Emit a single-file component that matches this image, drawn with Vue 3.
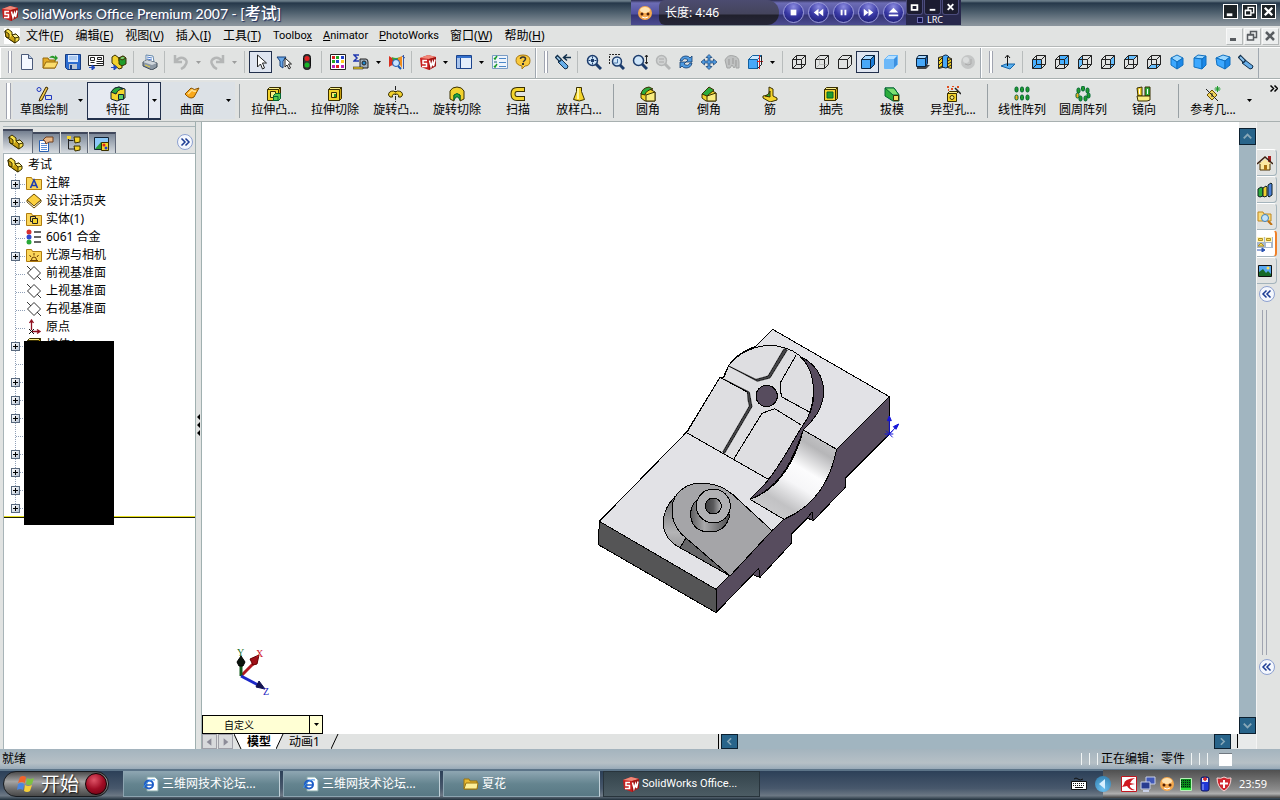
<template>
  <div class="app">
    <header class="titlebar">
      <svg class="ico" viewBox="0 0 16 16" v-html="icons.sw" />
      <h1 class="title">SolidWorks Office Premium 2007 - [<span class="title-doc">考试</span>]</h1>
      <div class="win-btns">
        <button v-for="b in winButtons" :key="b.label" class="win-btn" :aria-label="b.label">
          <svg viewBox="0 0 14 14" v-html="b.shape" />
        </button>
      </div>

      <div class="player">
        <svg class="player-face" viewBox="0 0 16 16" v-html="icons.face" />
        <div class="player-screen">长度: 4:46</div>
        <button v-for="b in playerButtons" :key="b.label" class="player-btn" :aria-label="b.label">
          <svg viewBox="0 0 20 20"><path :d="b.d" fill="#fff" /></svg>
        </button>
        <div class="player-side">
          <div class="player-wins">
            <button v-for="b in playerWins" :key="b.label" class="player-win" :aria-label="b.label">
              <svg viewBox="0 0 16 14"><path :d="b.d" fill="none" stroke="#fff" stroke-width="2" /></svg>
            </button>
          </div>
          <label class="lrc"><input type="checkbox" class="lrc-box" />LRC</label>
        </div>
      </div>
    </header>

    <nav class="menubar">
      <svg class="menu-logo" viewBox="0 0 16 16" v-html="icons.part" />
      <button v-for="m in menus" :key="m.text + m.key" class="menu-item" :class="{ word: !m.cjk }">
        {{ m.cjk }}{{ m.text }}<u>{{ m.key }}</u>{{ m.rest }}
      </button>
      <div class="doc-btns">
        <button v-for="b in winButtons" :key="b.label" class="doc-btn" :aria-label="b.label + ' document'">
          <svg viewBox="0 0 14 14" v-html="b.shape" />
        </button>
      </div>
    </nav>

    <div class="toolbars">
      <div v-for="(bar, i) in toolbars" :key="i" class="toolbar">
        <span class="grip" />
        <template v-for="(t, j) in bar" :key="j">
          <span v-if="t === '|'" class="tool-sep" />
          <template v-else>
            <button class="tool" :class="{ pressed: pressed.includes(t) }" :aria-label="t">
              <svg class="ico" viewBox="0 0 16 16" v-html="icons[t]" />
            </button>
            <button v-if="withMenu.includes(t)" class="tool-drop" :class="{ off: disabled.includes(t) }" :aria-label="t + ' menu'">
              <svg class="arrow" viewBox="0 0 5 3"><path d="M0 0h5L2.5 3z" /></svg>
            </button>
          </template>
        </template>
      </div>
    </div>

    <div class="commands">
      <span class="grip tall" />
      <template v-for="(c, i) in commands" :key="i">
        <span v-if="c === '|'" class="cmd-sep" />
        <div v-else class="cmd" :class="{ active: c.text === activeTab, tab: c.tab }">
          <button class="cmd-main" @click="c.tab && (activeTab = c.text)">
            <svg class="ico" viewBox="0 0 16 16" v-html="icons[c.icon]" />
            <span>{{ c.text }}</span>
          </button>
          <button v-if="c.drop" class="cmd-drop" :aria-label="c.text + ' menu'">
            <svg class="arrow" viewBox="0 0 5 3"><path d="M0 0h5L2.5 3z" /></svg>
          </button>
        </div>
      </template>
      <button class="cmd-more" aria-label="more">
        <svg viewBox="0 0 8 7"><path d="M.5.5l3 3-3 3M4.500.5l3 3-3 3" fill="none" stroke="#000" stroke-width="1.5" /></svg>
      </button>
    </div>

    <main class="main">
      <aside class="side">
        <div class="side-head">
          <button v-for="(t, i) in sideTabs" :key="t" class="side-tab" :class="{ active: i === 0 }" :aria-label="t">
            <svg class="ico" viewBox="0 0 16 16" v-html="icons[t]" />
          </button>
          <button class="round" aria-label="expand">
            <svg viewBox="0 0 14 14"><path d="M3.500 3.500L7 7l-3.500 3.500M7.500 3.500L11 7l-3.500 3.500" /></svg>
          </button>
        </div>
        <div class="tree">
          <div class="row root">
            <svg class="ico" viewBox="0 0 16 16" v-html="icons.part" />
            <span>考试</span>
          </div>
          <ul class="nodes">
            <li v-for="(n, i) in nodes" :key="i" class="row node">
              <span class="branch"><button v-if="n.plus" class="plus" aria-label="expand" /></span>
              <svg class="ico" viewBox="0 0 16 16" v-html="icons[n.icon]" />
              <span>{{ n.text }}</span>
            </li>
          </ul>
          <div class="rollback" />
          <div class="cover" />
        </div>
      </aside>
      <div class="splitter">
        <svg viewBox="0 0 5 22"><path d="M4 0v6L1 3zM4 8v6L1 11zM4 16v6L1 19z" /></svg>
      </div>

      <section class="work">
        <div class="view-row">
          <div class="view">
            <svg class="model" viewBox="-1134 -594 3111 1836">
              <defs>
                <linearGradient id="slot" gradientUnits="userSpaceOnUse" x1="735" y1="350" x2="590" y2="590">
                  <stop offset="0" stop-color="#c6c6c8" />
                  <stop offset=".16" stop-color="#b6b6b8" />
                  <stop offset=".42" stop-color="#fcfcfd" />
                  <stop offset=".6" stop-color="#f6f6f8" />
                  <stop offset=".85" stop-color="#c2c2c4" />
                  <stop offset="1" stop-color="#cacacc" />
                </linearGradient>
                <linearGradient id="boss" x1="0" y1="0" x2="1" y2="0">
                  <stop offset="0" stop-color="#5c5c5e" />
                  <stop offset=".35" stop-color="#a9a9ab" />
                  <stop offset="1" stop-color="#4c4c4e" />
                </linearGradient>
                <linearGradient id="hole" x1="0" y1="0" x2="1" y2="0">
                  <stop offset="0" stop-color="#3c3c3e" />
                  <stop offset=".5" stop-color="#5a5a5c" />
                  <stop offset="1" stop-color="#b5b5b7" />
                </linearGradient>
                <linearGradient id="pad" x1="0" y1="0" x2="0" y2="1">
                  <stop offset="0" stop-color="#6b6b6d" />
                  <stop offset=".45" stop-color="#b4b4b6" />
                  <stop offset="1" stop-color="#6b6b6d" />
                </linearGradient>
              </defs>
              <g stroke="#000" stroke-width="3" stroke-linejoin="round" shape-rendering="crispEdges">
                <path fill="#e2e2e6" d="M578 28L928 230 770 388Q752 460 714 510 670 575 612 598L576 632 408 808 58 604 320 336 420 172 430 172 446 136Q470 100 528 78z" />
                <path fill="#555556" d="M58 604L408 808V878L55 674z" />
                <path fill="#574c5e" d="M928 230V342L796 474V502L700 602 696 576 682 594 634 642V670L540 772 536 744 518 764 408 878V808L576 632 612 598C700 560 750 490 770 388z" />
                <path fill="#574c5e" d="M518 764L536 744 540 772zM682 594L696 576 700 602z" />
                <path fill="url(#slot)" d="M670 330L770 388C750 490 700 560 612 598L510 538C590 510 640 440 670 330z" />
                <path fill="#574c5e" d="M648 104C705 125 732 170 731 220 727 270 700 300 670 330 645 400 610 500 510 538 540 505 560 490 565 478 590 440 645 370 660 314 680 300 695 280 700 240 700 180 690 140 648 104z" />
                <path fill="#dedee1" d="M446 136C490 82 560 65 616 84 685 105 703 170 700 225 697 265 685 295 670 314 645 350 600 440 565 478L320 338 420 172 432 172z" />
                <path fill="none" d="M648 106L600 190 604 230 692 278M662 314L584 266 546 280 462 416" />
                <path fill="#444447" stroke-width="2" d="M432 178L502 216 504 240 508 258 428 396 434 400 516 260 508 216zM446 138L528 178 564 168 612 86 622 90 570 174 532 184z" />
                <path fill="none" d="M420 172L502 216M320 338L565 478" />
                <circle cx="560" cy="228" r="32" fill="#574c5e" />
                <path fill="url(#pad)" d="M285 530C236 580 236 650 300 683L450 768 318 656 276 580z" />
                <path fill="#666668" d="M300 683L318 654 450 768z" />
                <path fill="#a5a5a8" d="M276 570C276 510 330 484 380 490 420 494 440 510 460 525L576 632 450 768 318 654C290 632 276 605 276 570z" />
                <path fill="url(#boss)" d="M348 542C320 570 325 636 390 636 425 636 442 615 450 585z" />
                <circle cx="400" cy="558" r="51" fill="#b1b1b4" />
                <circle cx="400" cy="558" r="24" fill="url(#hole)" />
              </g>
              <g stroke="#1414d8" fill="#1414d8" stroke-width="3">
                <path d="M928 342V290M922 302l6-14 6 14zM928 342L955 314M940 320l16-8-8 16zM918 332l20 20M938 332l-20 20M914 342h26" />
              </g>
            </svg>
            <svg class="triad" viewBox="0 0 40 54">
              <path d="M8 32L23 17" stroke="#b01820" stroke-width="3" />
              <path d="M17 15l9-4-2 9-4 1z" fill="#a01018" stroke="#600" />
              <path d="M8 32V18" stroke="#145a1c" stroke-width="3" />
              <path d="M4 18l4-6 4 6-2 4H6z" fill="#0a140c" stroke="#000" />
              <path d="M8 32L27 42" stroke="#1c28c8" stroke-width="3" />
              <path d="M26 37l6 8-9-2z" fill="#141450" stroke="#101050" />
              <text x="4" y="12" fill="#1a701f">Y</text>
              <text x="23" y="13" fill="#d02030">X</text>
              <text x="30" y="51" fill="#2020c0">Z</text>
            </svg>
            <div class="config">
              <select class="config-select" aria-label="视图"><option>自定义</option></select>
              <svg class="arrow" viewBox="0 0 5 3"><path d="M0 0h5L2.5 3z" /></svg>
            </div>
          </div>
          <div class="vscroll">
            <button class="scroll-btn" aria-label="up"><svg viewBox="0 0 16 16"><path d="M4 10l4-4 4 4" /></svg></button>
            <button class="scroll-btn" aria-label="down"><svg viewBox="0 0 16 16"><path d="M4 6l4 4 4-4" /></svg></button>
          </div>
        </div>
        <div class="sheet-row">
          <div class="sheets">
            <button class="sheet-nav" aria-label="previous"><svg viewBox="0 0 14 12"><path d="M9 2v8L4 6z" /></svg></button>
            <button class="sheet-nav" aria-label="next"><svg viewBox="0 0 14 12"><path d="M5 2v8l5-4z" /></svg></button>
            <svg class="slant" viewBox="0 0 8 15"><path d="M0 0h8v15H7z" fill="#fff" /><path d="M0 0l7 15" stroke="#000" /></svg>
            <button class="sheet active">模型</button>
            <svg class="slant" viewBox="0 0 8 15"><path d="M0 0h7L0 15z" fill="#fff" /><path d="M7 0L0 15" stroke="#000" /></svg>
            <button class="sheet">动画1</button>
            <svg class="slant last" viewBox="0 0 8 15"><path d="M7 0L0 15" stroke="#000" /></svg>
          </div>
          <div class="hscroll">
            <button class="scroll-btn" aria-label="left"><svg viewBox="0 0 16 16"><path d="M10 4L6 8l4 4" /></svg></button>
            <button class="scroll-btn" aria-label="right"><svg viewBox="0 0 16 16"><path d="M6 4l4 4-4 4" /></svg></button>
          </div>
          <div class="corner" />
        </div>
      </section>

      <aside class="pane">
        <button v-for="p in paneTabs" :key="p" class="pane-tab" :class="{ active: p === 'palette' }" :aria-label="p">
          <svg class="ico" viewBox="0 0 16 16" v-html="icons[p]" />
        </button>
        <button class="round" aria-label="collapse">
          <svg viewBox="0 0 14 14"><path d="M6.500 3.500L3 7l3.500 3.500M10.500 3.500L7 7l3.500 3.500" /></svg>
        </button>
        <span class="pane-grip" />
        <button class="round" aria-label="collapse all">
          <svg viewBox="0 0 14 14"><path d="M6.500 3.500L3 7l3.500 3.500M10.500 3.500L7 7l3.500 3.500" /></svg>
        </button>
      </aside>
    </main>

    <footer class="status">
      <span>就绪</span>
      <div class="status-right">
        <i /><i /><i />
        <span class="editing">正在编辑：零件</span>
        <i /><i /><i />
        <span class="status-box" />
      </div>
    </footer>

    <div class="taskbar">
      <button class="start">
        <svg class="flag" viewBox="0 0 20 20">
          <path d="M4 3q3-2 6 0L9 9Q6 7 2 9z" fill="#f0642c" />
          <path d="M11 4q3 2 7 0l-2 6q-3 2-6 0z" fill="#7cc242" />
          <path d="M2 10q3-2 6 0l-1 6q-3-2-6 0z" fill="#4a86e0" />
          <path d="M9 11q3 2 7 0l-2 6q-3 2-6 0z" fill="#f6cf3a" />
        </svg>
        <span class="start-text">开始</span>
        <span class="start-orb" />
      </button>
      <div class="tasks">
        <button v-for="(t, i) in tasks" :key="i" class="task" :class="{ active: t.active }">
          <svg class="ico" viewBox="0 0 16 16" v-html="icons[t.icon]" />
          <span>{{ t.text }}</span>
        </button>
      </div>
      <svg class="keyboard" viewBox="0 0 16 16" v-html="icons.keyboard" />
      <div class="tray">
        <button class="tray-arrow" aria-label="hide icons"><svg viewBox="0 0 16 16"><path d="M10 3v10L4 8z" fill="#d8f0ff" /></svg></button>
        <svg v-for="t in tray" :key="t" class="ico" viewBox="0 0 16 16" v-html="icons[t]" />
        <time class="clock">23:59</time>
      </div>
    </div>
  </div>
</template>

<script setup>
import { ref } from 'vue'

const activeTab = ref('特征')

// cube parts shared by the display and orientation icons
const front = 'M1.5 5.500h9v9h-9z'
const outer = 'M1.500 5.500h9v9h-9zM1.500 5.500l4-4h9v9l-4 4M10.500 5.500l4-4'
const inner = 'M5.500 1.500v9h9M1.500 14.500l4-4'
const cube = (fill, d, hidden = true) =>
  `<path fill="${fill}" d="${d}"/><path fill="none" stroke="#222" d="${outer}${hidden ? inner : ''}"/>`
const solid = (a, b, c, line) =>
  `<g stroke="${line}"><path fill="${a}" d="M1.500 5.500l4-4h9l-4 4z"/><path fill="${b}" d="${front}"/><path fill="${c}" d="M10.500 5.500l4-4v9l-4 4z"/></g>`
const lens = (extra, c = '#1c3c6c', f = '#cfe6fa') =>
  `<path d="M10 10l5 5" stroke="${c}" stroke-width="3"/><circle cx="6.500" cy="6.500" r="5" fill="${f}" stroke="${c}" stroke-width="1.500"/>${extra}`
const folder = extra =>
  `<path d="M.5 14.500v-12h5l1 2h9v10z" fill="#fbd65a" stroke="#b07c10"/>${extra}`
const yellowBox = extra =>
  `<g stroke="#3a3000"><path fill="#fbf08a" d="M1.500 3.500l2-2h11l-2 2z"/><path fill="#f4d42c" d="M1.500 3.500h11v11h-11z"/><path fill="#c8a010" d="M12.500 3.500l2-2v11l-2 2z"/></g>${extra}`
const pills = pts => pts.map(([x, y, c = '#1f9c2c']) =>
  `<rect x="${x}" y="${y}" width="3" height="5" rx="1.500" fill="${c}" stroke="#063"/>`).join('')

const icons = {
  sw: '<path d="M0 4l8-3 8 2v9l-7 4-8-3z" fill="#c81e1e"/><path d="M0 4l8-3 8 2-7 2z" fill="#f08878"/><path d="M9 5l7-2v9l-7 4z" fill="#a01412"/><path d="M7 6.500H3v3h3.500v3H2M9.500 6.500l1.500 6L12.500 8l1 4L15 5.500" fill="none" stroke="#fff" stroke-width="1.500"/>',
  part: '<g stroke="#3a3000"><path fill="#f7df4a" d="M1 3l3-2 4 3v3l4-1 3 3v3l-4 3-9-6z"/><path fill="#c8a010" d="M1 3l4 3v4l-3-1zM8 7l3 2v6l-6-4"/><path fill="#fff29a" d="M8 7l4-1 3 3-4 1z"/></g>',
  face: '<circle cx="8" cy="8" r="7" fill="#f5a94e"/><ellipse cx="8" cy="5" rx="5" ry="3" fill="#ffe2b0"/><circle cx="5" cy="9" r="1.500" fill="#502008"/><circle cx="11" cy="9" r="1.500" fill="#502008"/><path d="M5 12q3 2 6 0" stroke="#fff" fill="none"/>',
  new: '<path d="M2.500.5h7l4 4v11h-11z" fill="#f4f8ff" stroke="#4a5a7a"/><path d="M9.500.5v4h4" fill="#b8cbe6" stroke="#4a5a7a"/>',
  open: '<path d="M1 14V4h5l1 2h6v8z" fill="#e4ac28" stroke="#96680c"/><path d="M1 14l3-6h12l-3 6z" fill="#fbdc6c" stroke="#96680c"/><path d="M7 4q3-4 6-1V1l3 3-3 3V5q-3-2-6-1z" fill="#2a9a2a"/>',
  save: '<path d="M.5.5h15v15h-13l-2-2z" fill="#2c6cd0" stroke="#163c80"/><path d="M3 1h10v7H3z" fill="#dcebff"/><path d="M4 3h8M4 5h8" stroke="#7ca8e0"/><path d="M4 10h8v5H4z" fill="#b8c4d4"/><path d="M5 11h2v4H5z" fill="#163c80"/>',
  makeDrawing: '<path d="M.5 1.500h15v10H.5z" fill="#fff" stroke="#222"/><path d="M2.500 3.500h4v3h-4zM9.500 3.500h4v2h-4zM8.500 7.500h7M8.500 9.500h7M2.500 8.500h4" fill="none" stroke="#222"/><path d="M1 13.500h4M4 11l3 2.500L4 16z" fill="#2048c0" stroke="#2048c0"/>',
  makeAssembly: '<g stroke="#3a3000"><path fill="#f2d22e" d="M1 3l3-2 4 3v3l3 2v5l-3 1-7-6z"/><path fill="#1f9c2c" d="M8 4l4-2 3 2v6l-4 2-3-2z"/><path fill="#7bd070" d="M8 4l4-2 3 2-4 2z"/></g><path d="M0 13.500h3M3 11l3 2.500L3 16z" fill="#2048c0" stroke="#2048c0"/>',
  print: '<path d="M4 1l7 1 1 6-8-1z" fill="#fff" stroke="#6688aa"/><path d="M5 3l5 1M5 5l5 1" stroke="#5080d0"/><path d="M1 8l4-2 10 3v4l-5 3-9-4z" fill="#8c98a4" stroke="#404c58"/><path d="M1 8l9 3 5-2-10-3z" fill="#cfd6dc"/><path d="M3 11l5 2" stroke="#e8d040"/>',
  undo: '<path d="M2 1v7h7M3 7q3-4 7-3 5 2 3 6-1 3-5 5" fill="none" stroke="#b4b6b6" stroke-width="2.500"/>',
  redo: '<path d="M14 1v7H7M13 7q-3-4-7-3-5 2-3 6 1 3 5 5" fill="none" stroke="#b4b6b6" stroke-width="2.500"/>',
  select: '<path d="M4.500 1v12l3-3 2 5 2-1-2-5h4z" fill="#fff" stroke="#222"/>',
  filter: '<path d="M1 3h9L7 7v7l-3-2V7z" fill="#6aa8e8" stroke="#173f78"/><path d="M9 4v9l2-2 2 4 1.500-1-2-4h3z" fill="#fff" stroke="#222"/>',
  rebuild: '<rect x="4.500" y=".5" width="7" height="15" rx="3" fill="#333" stroke="#111"/><circle cx="8" cy="4.500" r="2.500" fill="#e02020"/><circle cx="8" cy="11" r="2.500" fill="#18b428"/>',
  palettes: '<path d="M.5.5h15v15H.5z" fill="#fff" stroke="#222"/><path d="M2 2h3v3H2zM6 11h3v3H6z" fill="#d22"/><path d="M6 2h3v3H6zM2 6h3v3H2z" fill="#2a2"/><path d="M11 2h3v3h-3zM6 6h3v3H6z" fill="#24c"/><path d="M11 6h3v3h-3z" fill="#fc2"/><path d="M2 11h3v3H2zM11 11h3v3h-3z" fill="#b2b"/>',
  measure: '<path d="M6 1H1l3 3-3 3h5" fill="none" stroke="#2038b0" stroke-width="1.500"/><path d="M7 5h6q2 0 2 3v6H7z" fill="#a4b0bc" stroke="#222"/><circle cx="11" cy="9" r="2" fill="#28c" stroke="#222"/><path d="M0 13h10v2H0z" fill="#f0cc20" stroke="#222" stroke-width=".6"/>',
  check: '<path d="M0 2q4 3 6 2l-1 7q-3 0-5 2z" fill="#d83020"/><path d="M3 3q4 2 8 0v8l-6 1z" fill="#38a838"/><path d="M9 4l4-2v12q-2-4-4-4z" fill="#f08c1c"/><path d="M14.500 1v14M13 2l3 2" stroke="#3858a8"/><circle cx="7" cy="9" r="3.500" fill="#c8e4ff" stroke="#1858b0"/><path d="M9 12l3 3" stroke="#1858b0" stroke-width="2"/>',
  views: '<path d="M.5 1.500h15v13H.5z" fill="#e4eefc" stroke="#1c448c"/><path d="M1 2h14v2H1z" fill="#3470cc"/><path d="M4.500 4v10" stroke="#1c448c"/><path d="M1 4h3v10H1z" fill="#a8c4ec"/>',
  options: '<path d="M.5 1.500h15v13H.5z" fill="#eef4fb" stroke="#7a9cc4"/><path d="M2 4l1 1 2-3M2 12l1 1 2-3" fill="none" stroke="#1a9c2a" stroke-width="1.500"/><path d="M2 7h3v2H2z" fill="#8ab"/><path d="M7 4.500h7M7 8.500h7M7 12.500h7" stroke="#4c88c8"/>',
  help: '<path d="M8 1q7 0 7 5.500T10 12l-3 3v-3q-6-1-6-5.500Q1 1 8 1z" fill="#f9c93c" stroke="#a87810"/><path d="M5.500 5q0-2 2.500-2t2.500 2q0 1-2.500 3" fill="none" stroke="#333" stroke-width="1.500"/><path d="M7 9h2v2H7z" fill="#333"/>',
  prevView: '<path d="M3 8l3-3 7 7q0 3-3 3z" fill="#68aee8" stroke="#12304c"/><path d="M1 2l5 5" stroke="#12304c" stroke-width="4"/><path d="M2 3l3 3" stroke="#a8d4f4" stroke-width="1.500"/><path d="M16 3.500H9M12 .5L8.500 3.500 12 6.500" fill="none" stroke="#12304c" stroke-width="1.500"/>',
  zoomFit: lens('<path d="M6.500 2.500v8M2.500 6.500h8" stroke="#1c3c6c" stroke-dasharray="2 4"/><path d="M5 5h3v3H5z" fill="#1c3c6c"/>'),
  zoomArea: '<path d="M.5 10V.5H12" fill="none" stroke="#222" stroke-dasharray="2 1"/><path d="M11 11l4 4" stroke="#1c3c6c" stroke-width="3"/><circle cx="8" cy="7.500" r="4.500" fill="#cfe6fa" stroke="#1c3c6c" stroke-width="1.500"/><path d="M8.500 5v4H5" fill="none" stroke="#4c78a8"/>',
  zoomInOut: lens('<path d="M14.500 1v9M13 3l1.500-2L16 3M13 8l1.500 2L16 8" fill="none" stroke="#222"/>'),
  zoomSel: lens('<path d="M4 5h5M4 8h5" stroke="#aaa"/>', '#b4b6b6', '#d0d2d2'),
  rotate: '<path d="M2 7q1-5 6-5 3 0 4 2l2-2v6H8l2-2q-4-3-6 1zM14 9q-1 5-6 5-3 0-4-2l-2 2V8h6l-2 2q4 3 6-1z" fill="#4f9ae0" stroke="#123c70" stroke-width=".8"/>',
  pan: '<path d="M8 .5l3 3H9v3.500h3.500V5L16 8l-3.500 3V9H9v3.500h2l-3 3-3-3h2V9H3.500v2L0 8l3.500-3v2H7V3.500H5z" fill="#4f9ae0" stroke="#123c70" stroke-width=".7"/>',
  threeD: '<path d="M1 6q3-6 9-4 5 1 5 6v6h-3v-3l-2 3-2-3-2 3H3z" fill="#c0c2c2" stroke="#a4a6a6"/><path d="M5 5v6M9 4v6M12 6v5" stroke="#999"/>',
  stdViews: solid('#c8e8ff', '#48a8f8', '#e8f4ff', '#1060a0') + '<path d="M12.500 1v14M10 7.500h6" stroke="#d02020"/><path d="M14.500 1.500v9l-4 4" fill="none" stroke="#222"/>',
  wire: cube('none', ''),
  hiddenGray: `<path fill="none" stroke="#222" d="${outer}"/><path fill="none" stroke="#999" stroke-dasharray="1 1" d="${inner}"/>`,
  hiddenOff: cube('none', '', false),
  shadedEdges: solid('#a8d8ff', '#48a8f8', '#1c7cd8', '#0a2440'),
  shaded: solid('#b8e0ff', '#6cb8f8', '#3c90e0', '#6cb8f8'),
  shadow: '<path d="M3 13l3-2h10l-4 4H3z" fill="#444"/><g stroke="#0a2440"><path fill="#a8d8ff" d="M2.500 4.500l2-3h9l-2 3z"/><path fill="#48a8f8" d="M2.500 4.500h9v8h-9z"/><path fill="#1c6cc0" d="M11.500 4.500l2-3v8l-2 3z"/></g>',
  section: '<path d="M5 3q4-4 7 0v10q-3 2-7 0z" fill="#48a8f8" stroke="#0a2440"/><path d="M1.500 3.500l4-1v11l-4 1zM10.500 3.500l4 1v10l-4-1z" fill="#f4d020" stroke="#222"/><path d="M2 7l3-3M2 11l3-3M2 14l3-2M11 7l3-2M11 10l3-2M11 13l3-2" stroke="#222"/>',
  ball: '<circle cx="8" cy="8" r="7" fill="#c4c6c6"/><circle cx="6" cy="6" r="3" fill="#dadcdc"/><path d="M5 10q3 2 6 0V5" stroke="#aaa" fill="none"/>',
  normal: '<path d="M1 12l5-2h9l-5 5z" fill="#58b0f0" stroke="#1464a8"/><path d="M7.500 12V2M5 4l2.500-3L10 4" fill="none" stroke="#111"/>',
  vFront: cube('#48b0ff', front),
  vBack: cube('#48b0ff', 'M5.500 1.500h9v9h-9z'),
  vLeft: cube('#68c0ff', 'M1.500 5.500l4-4v9l-4 4z'),
  vRight: cube('#68c0ff', 'M10.500 5.500l4-4v9l-4 4z'),
  vTop: cube('#68c0ff', 'M1.500 5.500l4-4h9l-4 4z'),
  vBottom: cube('#68c0ff', 'M1.500 14.500l4-4h9l-4 4z'),
  vIso: '<g stroke="#1070c0"><path fill="#9cd8ff" d="M8 1l6 3-6 4-6-4z"/><path fill="#3ca8ff" d="M2 4l6 4v7l-6-4z"/><path fill="#1c88e8" d="M14 4L8 8v7l6-4z"/></g>',
  vTri: '<g stroke="#1070c0"><path fill="#9cd8ff" d="M2 4l4-3 8 1-4 3z"/><path fill="#3ca8ff" d="M2 4l8 1v10l-8-2z"/><path fill="#1c88e8" d="M10 5l4-3v9l-4 4z"/></g>',
  vDi: '<g stroke="#1070c0"><path fill="#9cd8ff" d="M1 4l7-3 7 2-5 4z"/><path fill="#3ca8ff" d="M1 4l9 3v8l-8-4z"/><path fill="#1c88e8" d="M10 7l5-4v8l-5 4z"/></g>',
  viewOrient: '<path d="M7 6l-3 3 8 6q3 0 3-3z" fill="#68aee8" stroke="#12304c"/><path d="M1 2l6 6" stroke="#12304c" stroke-width="4"/><path d="M2 3l4 4" stroke="#8cc4f0" stroke-width="2"/>',
  sketch: '<circle cx="3" cy="3.500" r="2" fill="none" stroke="#2038c0"/><path d="M9.500 9.500h6v4h-6z" fill="none" stroke="#2038c0"/><path d="M10 1l2 1-6 12-3 1 1-3z" fill="#f4cc50" stroke="#3a2800"/>',
  feature: '<g stroke="#123"><path fill="#f4d42c" d="M1 6q3-5 8-5l6 2v9l-8 3-6-2z"/><path fill="#2ca83c" d="M1 6q3-5 8-5l4 2q-5 0-7 5z"/><path fill="#5cd068" d="M8.500 8.500h5v5h-5z"/></g>',
  surface: '<path d="M1 8l6-6q3 3 8 0l-5 9q-4 3-9-3z" fill="#f8a81c" stroke="#8c5400"/><path d="M4 8l4-4q2 2 4 1" fill="none" stroke="#ffe090" stroke-width="1.500"/>',
  extrude: yellowBox('<path d="M4.500 5.500h5v6h-5z" fill="#fbf08a" stroke="#3a3000"/><path d="M7.500 9.500l2-2h5v5l-2 2h-5z" fill="#58c850" stroke="#063"/><path d="M8 10.500h4v4" fill="none" stroke="#063"/>'),
  cutExtrude: yellowBox('<path d="M4.500 6.500h5v5h-5z" fill="#f8ee70" stroke="#3a3000"/><path d="M7 8h2v3H7z" fill="#1f9c2c"/>'),
  revolve: '<path d="M7.500 0v16" stroke="#222" stroke-dasharray="4 1"/><path d="M.5 9q0-4 5-4l2 1 2-1q5 0 5 4-1 3-4 2 1-3-3-3t-3 3q-3 1-4-2z" fill="#f2d22e" stroke="#3a3000"/>',
  cutRevolve: '<path d="M1 5q2-4 7-4t7 4v8l-4 2V9H5v6l-4-2z" fill="#f2d22e" stroke="#3a3000"/><path d="M5 14V9q3-3 6 0v5l-2-3H7z" fill="#2ca83c" stroke="#063"/>',
  sweep: '<path d="M15 3.500H7Q3 3.500 3 8t4 4.500h8" fill="none" stroke="#3a3000" stroke-width="5"/><path d="M14 3.500H7Q3 3.500 3 8t4 4.500h7" fill="none" stroke="#f4d42c" stroke-width="3"/>',
  loft: '<path d="M5.500 1.500h5v4l3 8q-5 3-11 0l3-8z" fill="#f4d42c" stroke="#3a3000"/><path d="M7 2v11" stroke="#fff6a0" stroke-width="2"/>',
  fillet: '<g stroke="#3a3000"><path fill="#f4d42c" d="M1 7l7-5 7 4v9H5l-4-3z"/><path fill="#f9ec80" d="M6 9l9-3v9H6z"/><path fill="#2cac3c" d="M1 8Q2 2 9 1l4 2Q6 4 5 9z"/></g>',
  chamfer: '<g stroke="#3a3000"><path fill="#f4d42c" d="M1 8l7-5 7 4v8H5l-4-3z"/><path fill="#f9ec80" d="M6 10l9-3v8H6z"/><path fill="#2cac3c" d="M1 8l7-7 5 3-7 6z"/></g>',
  rib: '<g stroke="#3a3000"><path fill="#f4d42c" d="M7 1l4 2v7l4 2v2l-7 2-7-4v-2l6-1z"/><path fill="#2cac3c" d="M8 5v6l-5-1q4-1 5-5z"/></g>',
  shell: yellowBox('<path d="M4 6h6v6H4z" fill="#1f9c2c" stroke="#063"/>'),
  draft: '<g stroke="#063"><path fill="#2cac3c" d="M1 2h9l5 7v6h-6L1 10z"/><path fill="#7ce070" d="M1 2h9l5 7h-6z"/><path fill="#f4e060" stroke="#3a3000" d="M9.500 9.500h5v5h-5z"/></g>',
  hole: '<g stroke="#3a3000"><path fill="#fbf08a" d="M2.500 7.500l2-2h9l-2 2z"/><path fill="#f4d42c" d="M2.500 7.500h9v8h-9z"/><circle cx="7" cy="11.500" r="2" fill="#f9ec80"/></g><path d="M2 1h2M6 3h2M7 0h2M12 1h2M3 4h1" stroke="#e05020" stroke-width="2"/><path d="M10 2l6 6" stroke="#222" stroke-width="1.500"/>',
  linear: pills([[1, 1], [6.500, 1], [12, 1], [1, 9, '#f2b020'], [6.500, 9], [12, 9]]),
  circular: pills([[6.500, 0], [2, 2], [11, 2], [1, 7, '#f2b020'], [12, 7], [4, 10], [9, 10]]),
  mirror: '<g stroke="#3a3000"><path fill="#f4d42c" d="M1 2l5-1v9H2z"/><path fill="#2cac3c" d="M9 1h5v9H9z"/><path fill="#f9ec80" d="M1 10h13v4l-3 1H2z"/></g><path d="M3.500 3v5M11.500 3v5" stroke="#fff"/>',
  refGeom: '<path d="M7 4l5 5-5 5-5-5z" fill="#f0d45c" stroke="#6a5000"/><path d="M1 3l12 12M7 7v4" stroke="#222"/><path d="M12.500 0v6M9.500 3h6M10.500 1l4 4M14.500 1l-4 4" stroke="#1f9c2c"/>',
  props: '<path d="M1.500 4.500h9v11h-9z" fill="#fff" stroke="#2860b0"/><path d="M3 7.500h6M3 9.500h6M3 11.500h6M3 13.500h6" stroke="#5c90d8"/><path d="M5 4l3-3h7v5h-4l-3 2-1-3z" fill="#e8b888" stroke="#704020"/>',
  configs: '<path d="M2.500 1v12h6M2.500 4.500h5" fill="none" stroke="#222"/><path d="M8 1h6v5l-5 1zM8 10h6v4l-5 1z" fill="#f4d42c" stroke="#3a3000"/><path d="M1 0h4v3H1z" fill="#f4d42c"/>',
  render: '<path d="M.5 1.500h14v12H.5z" fill="#8cc8f8" stroke="#123"/><path d="M1 13l6-7 4 7z" fill="#2a9a3a"/><path d="M7.500 6.500h7v8h-7z" fill="#f4d42c" stroke="#3a3000"/><circle cx="10" cy="9" r="1.500" fill="#d22"/><circle cx="12" cy="12" r="1.500" fill="#24c"/>',
  notes: folder('<path d="M4.500 13L8 5l3.500 8M6 10.500h4" fill="none" stroke="#1c3cb0" stroke-width="1.600"/>'),
  binder: '<path d="M8 1l7 6-7 6-7-6z" fill="#fbd040" stroke="#6a4c00"/><path d="M1 7v2l7 6 7-6V7l-7 6z" fill="#fff" stroke="#6a4c00"/>',
  bodies: folder('<path d="M4.500 5.500h5v5h-5z" fill="none" stroke="#222"/><path d="M6.500 7.500h5v5h-5z" fill="#f4d42c" stroke="#222"/>'),
  material: '<circle cx="3" cy="3" r="2.500" fill="#d83030"/><circle cx="3" cy="8" r="2.500" fill="#3048d0"/><circle cx="3" cy="13" r="2.500" fill="#28a838"/><path d="M8 3h7M8 8h7M8 13h7" stroke="#333" stroke-width="1.500"/>',
  lights: folder('<path d="M4 13.500h8M5.500 13q0-3 2.500-3t2.500 3M8 8.500V6M5 10L3.500 8M11 10l1.500-2" fill="none" stroke="#6a3c00"/>'),
  plane: '<path d="M8 1.500l6.500 6.500L8 14.500 1.500 8zM1 1l4 4M11 11l4 4" fill="none" stroke="#333"/>',
  origin: '<path d="M5.500 11V1M3.500 4l2-3 2 3M6 12.500h8M11 10.500l3 2-3 2" fill="none" stroke="#901020" stroke-width="1.300"/><path d="M3 10l5 5M8 10l-5 5" stroke="#111"/>',
  home: '<path d="M11 1h3v6h-3z" fill="#a02020"/><path d="M3 8h10v7H3z" fill="#fbe8a0" stroke="#4a3000"/><path d="M0 9l8-7 8 7" fill="none" stroke="#3a2010" stroke-width="1.500"/><path d="M2 9l6-5 6 5z" fill="#fbe8a0"/><path d="M7 10h3v5H7z" fill="#a87010"/>',
  library: '<g stroke="#122"><path fill="#2cac3c" d="M1 7l3-2 2 1v8l-3 1-2-1z"/><path fill="#f0d030" d="M6 6l3-2 1 1v9l-3 1-1-1z"/><path fill="#4c80d8" d="M11 3l3-2 1 1v11l-3 2-1-1z"/></g>',
  explorer: '<path d="M1 12V3h5l1 2h7v7z" fill="#f8dc80" stroke="#c08820"/><circle cx="8" cy="9" r="3.500" fill="#c4e4fc" stroke="#4080b8"/><path d="M11 12l4 4" stroke="#c07010" stroke-width="2"/>',
  palette: '<path d="M0 1h16v11H0z" fill="#a8b8cc"/><path d="M0 1h7v5H0zM8 1h7v5H8z" fill="#fff4c0"/><g stroke="#b09020"><path fill="#f4dc60" d="M1.500 2.500h4v2h-4zM9.500 2.500h4v2h-4zM1 10l3-3 3 3z"/></g><path d="M9 7h5v4H9z" fill="#fff"/><path d="M0 14h6M5 12l3 2-3 2z" stroke="#2850b0" fill="#2850b0"/>',
  picture: '<path d="M1.500 2.500h13v11h-13z" fill="#58a8f0" stroke="#111"/><path d="M2 13V9l4-3 3 4 2-2 3 3v2z" fill="#186a28"/><circle cx="11" cy="5" r="1.500" fill="#fce060"/>',
  ie: '<path d="M4 1h8l3 3v11H4z" fill="#fff" stroke="#8aa"/><circle cx="6" cy="8.500" r="4" fill="none" stroke="#1c5cc8" stroke-width="2"/><path d="M3 9h7" stroke="#1c5cc8" stroke-width="1.500"/><path d="M0 12Q6 2 12 4" fill="none" stroke="#3c90e8"/>',
  folder: '<path d="M1 13V3h5l1 2h7v8z" fill="#e8b830" stroke="#9a7410"/><path d="M1 13l2-6h12l-1 6z" fill="#fdf09a" stroke="#9a7410"/>',
  keyboard: '<path d="M3 3q2-2 4 0t5 0" fill="none" stroke="#111"/><path d="M.5 5.500h15v8H.5z" fill="#fff" stroke="#111"/><path d="M2 7.500h12M2 9.500h12" stroke="#111" stroke-dasharray="1 1"/><path d="M4 11.500h8" stroke="#111"/>',
  bird: '<path d="M.5.5h15v15H.5z" fill="#fff" stroke="#c01820"/><path d="M14 2Q3 3 3 8l-2 3 5-1q3 5 8 4-6-2-5-5l5-1-5-1q1-3 5-5z" fill="#d01820"/>',
  network: '<path d="M6 1h9v7H6z" fill="#4058b8" stroke="#c8d0e8"/><path d="M1 6h9v7H1z" fill="#283c90" stroke="#c8d0e8"/><path d="M3 15h6" stroke="#c8d0e8" stroke-width="2"/>',
  meter: '<path d="M2.500 2.500h11v12h-11z" fill="#0a8a1c" stroke="#b8f0b8"/><path d="M3 4.500h10M3 6.500h10M3 8.500h10M3 10.500h10" stroke="#021" stroke-dasharray="1 1"/><path d="M3 12h10v2H3z" fill="#28e038"/>',
  battery: '<rect x="4" y="1" width="8" height="14" rx="2" fill="#2038d8" stroke="#101860"/><path d="M5 2h6v4H5z" fill="#e8e8f0"/><path d="M8 1v4M6 3h4" stroke="#d02020" stroke-width="1.500"/><path d="M6 8v6" stroke="#a0b0ff"/>',
  shield: '<path d="M1 2q4 1 7-1 3 2 7 1 0 9-7 13Q1 11 1 2z" fill="#d02830" stroke="#f8d8d8"/><path d="M8 4v8M4 7.500h8" stroke="#fff" stroke-width="2"/>'
}

const winButtons = [
  { label: 'minimize', shape: '<path d="M3 10.500h6" stroke="currentColor" stroke-width="3"/>' },
  { label: 'restore', shape: '<path d="M5.500 5V2.500h6v6H9M2.500 6h6v5h-6zM2 5.500h7M5 2.500h7" fill="none" stroke="currentColor" stroke-width="1.500"/>' },
  { label: 'close', shape: '<path d="M3 3l8 8M11 3l-8 8" stroke="currentColor" stroke-width="2.500"/>' }
]

const playerButtons = [
  { label: 'stop', d: 'M7 7h6v6H7z' },
  { label: 'rewind', d: 'M10 6v8l-5-4zM15 6v8l-5-4z' },
  { label: 'pause', d: 'M7 7h2v6H7zM11 7h2v6h-2z' },
  { label: 'forward', d: 'M5 6v8l5-4zM10 6v8l5-4z' },
  { label: 'eject', d: 'M10 5l5 5H5zM5 12h10v2H5z' }
]
const playerWins = [
  { label: 'restore player', d: 'M5 5h6v5H5z' },
  { label: 'minimize player', d: 'M5 10h6' },
  { label: 'close player', d: 'M5 4l6 6M11 4l-6 6' }
]

const menus = [
  { cjk: '文件', text: '(', key: 'F', rest: ')' },
  { cjk: '编辑', text: '(', key: 'E', rest: ')' },
  { cjk: '视图', text: '(', key: 'V', rest: ')' },
  { cjk: '插入', text: '(', key: 'I', rest: ')' },
  { cjk: '工具', text: '(', key: 'T', rest: ')' },
  { text: 'Toolbo', key: 'x', rest: '' },
  { text: '', key: 'A', rest: 'nimator' },
  { text: '', key: 'P', rest: 'hotoWorks' },
  { cjk: '窗口', text: '(', key: 'W', rest: ')' },
  { cjk: '帮助', text: '(', key: 'H', rest: ')' }
]

const toolbars = [
  ['new', 'open', 'save', 'makeDrawing', 'makeAssembly', '|', 'print', '|', 'undo', 'redo', '|',
    'select', 'filter', 'rebuild', '|', 'palettes', 'measure', 'check', '|', 'sw', 'views', 'options', 'help'],
  ['prevView', '|', 'zoomFit', 'zoomArea', 'zoomInOut', 'zoomSel', 'rotate', 'pan', 'threeD', 'stdViews', '|',
    'wire', 'hiddenGray', 'hiddenOff', 'shadedEdges', 'shaded', '|', 'shadow', 'section', 'ball'],
  ['normal', '|', 'vFront', 'vBack', 'vLeft', 'vRight', 'vTop', 'vBottom', 'vIso', 'vTri', 'vDi', 'viewOrient']
]
const withMenu = ['undo', 'redo', 'measure', 'sw', 'views', 'stdViews']
const disabled = ['undo', 'redo']
const pressed = ['select', 'shadedEdges']

const commands = [
  { icon: 'sketch', text: '草图绘制', drop: true, tab: true },
  { icon: 'feature', text: '特征', drop: true, tab: true },
  { icon: 'surface', text: '曲面', drop: true, tab: true },
  '|',
  { icon: 'extrude', text: '拉伸凸...' },
  { icon: 'cutExtrude', text: '拉伸切除' },
  { icon: 'revolve', text: '旋转凸...' },
  { icon: 'cutRevolve', text: '旋转切除' },
  { icon: 'sweep', text: '扫描' },
  { icon: 'loft', text: '放样凸...' },
  '|',
  { icon: 'fillet', text: '圆角' },
  { icon: 'chamfer', text: '倒角' },
  { icon: 'rib', text: '筋' },
  { icon: 'shell', text: '抽壳' },
  { icon: 'draft', text: '拔模' },
  { icon: 'hole', text: '异型孔...' },
  '|',
  { icon: 'linear', text: '线性阵列' },
  { icon: 'circular', text: '圆周阵列' },
  { icon: 'mirror', text: '镜向' },
  '|',
  { icon: 'refGeom', text: '参考几...', drop: true }
]

const sideTabs = ['part', 'props', 'configs', 'render']
const paneTabs = ['home', 'library', 'explorer', 'palette', 'picture']

const nodes = [
  { icon: 'notes', text: '注解', plus: true },
  { icon: 'binder', text: '设计活页夹', plus: true },
  { icon: 'bodies', text: '实体(1)', plus: true },
  { icon: 'material', text: '6061 合金' },
  { icon: 'lights', text: '光源与相机', plus: true },
  { icon: 'plane', text: '前视基准面' },
  { icon: 'plane', text: '上视基准面' },
  { icon: 'plane', text: '右视基准面' },
  { icon: 'origin', text: '原点' },
  { icon: 'extrude', text: '拉伸1', plus: true },
  {}, { plus: true }, { plus: true }, { plus: true }, {},
  { plus: true }, { plus: true }, { plus: true }, { plus: true }
]

const tasks = [
  { icon: 'ie', text: '三维网技术论坛...' },
  { icon: 'ie', text: '三维网技术论坛...' },
  { icon: 'folder', text: '夏花' },
  { icon: 'sw', text: 'SolidWorks Office...', active: true }
]
const tray = ['bird', 'network', 'face', 'meter', 'battery', 'shield']
</script>

<style>
html,
body {
  margin: 0;
  height: 100%;
}
#app {
  height: 100%;
}
</style>

<style scoped>
.app {
  display: flex;
  flex-direction: column;
  height: 100%;
  overflow: hidden;
  background: #e1e3e2;
  color: #000;
  font: 12px/16px "Noto Sans", "Noto Sans CJK SC", sans-serif;
}
button {
  padding: 0;
  border: 0;
  background: none;
  color: inherit;
  font: inherit;
}
svg {
  display: block;
  flex: none;
}
.ico {
  width: 16px;
  height: 16px;
}
.arrow {
  width: 5px;
  height: 3px;
}

/* title bar */
.titlebar {
  position: relative;
  display: flex;
  align-items: center;
  flex: none;
  height: 26px;
  padding: 0 4px 0 2px;
  box-sizing: border-box;
  background: linear-gradient(#6a7c88 0, #6a7c88 1px, #26384a 3px, #4c5e6c 12px, #8a949c 25px);
}
.title {
  margin: 0 0 0 4px;
  color: #fff;
  font-family: Lato, "Noto Sans CJK SC", sans-serif;
  font-size: 14px;
  font-weight: 500;
  line-height: 24px;
  text-shadow: 1px 1px 1px #1c2c5c;
}
.title-doc {
  font-size: 16px;
}
.win-btns {
  display: flex;
  gap: 4px;
  margin: 0 0 4px auto;
}
.win-btn {
  width: 15px;
  height: 15px;
  border: 1px solid #fff;
  background: #1c2226;
  color: #fff;
  box-sizing: border-box;
}
.win-btn svg {
  width: 13px;
  height: 13px;
}
.player {
  position: absolute;
  left: 631px;
  top: 0;
  display: flex;
  align-items: center;
  height: 25px;
  width: 330px;
  background: linear-gradient(#2c2c50 0, #6c6cb4 3px, #5050a0 14px, #343474 15px, #4c4c90);
}
.player-face {
  width: 16px;
  height: 16px;
  margin: 0 6px;
}
.player-screen {
  flex: 1;
  height: 25px;
  padding-left: 6px;
  border-radius: 6px 12px 12px 6px;
  background: linear-gradient(#4c4c70 0, #44445c 14px, #20202c 15px, #262638);
  color: #fff;
  line-height: 26px;
}
.player-btn {
  width: 21px;
  height: 21px;
  margin-left: 4px;
  border: 1px solid #9c9cdc;
  border-radius: 50%;
  background: radial-gradient(circle at 50% 20%, #8c8ce0, #3838a4 50%, #181868);
  box-sizing: border-box;
}
.player-btn svg {
  width: 19px;
  height: 19px;
}
.player-side {
  width: 55px;
  height: 25px;
  margin-left: 2px;
  background: #28284c;
}
.player-wins {
  display: flex;
  gap: 1px;
}
.player-win {
  width: 17px;
  height: 15px;
  border: 1px solid #4c4c7c;
  border-top: 0;
  border-radius: 0 0 3px 3px;
  background: #1c1c30;
  box-sizing: border-box;
}
.player-win svg {
  width: 15px;
  height: 14px;
}
.lrc {
  display: flex;
  align-items: center;
  gap: 4px;
  height: 10px;
  padding-left: 11px;
  color: #fff;
  font-size: 9px;
  line-height: 10px;
}
.lrc-box {
  appearance: none;
  width: 6px;
  height: 6px;
  margin: 0;
  border: 1px solid #6c6cb0;
  background: #101048;
}

/* menu */
.menubar {
  display: flex;
  align-items: center;
  flex: none;
  height: 20px;
  padding: 0 1px 0 4px;
  border-bottom: 1px solid #b4b8b8;
}
.menu-logo {
  width: 16px;
  height: 16px;
  margin-right: 6px;
  background: #fff;
}
.menu-item {
  margin-right: 12px;
  line-height: 18px;
  white-space: nowrap;
}
.menu-item.word {
  margin-right: 11px;
  font-family: Roboto, sans-serif;
  font-size: 11px;
}
.doc-btns {
  display: flex;
  gap: 1px;
  margin-left: auto;
}
.doc-btn {
  width: 17px;
  height: 17px;
  border: 1px solid #f8f8f8;
  border-right-color: #b4b8b8;
  border-bottom-color: #b4b8b8;
  background: #eceeee;
  box-sizing: border-box;
  color: #585c60;
}
.doc-btn svg {
  width: 14px;
  height: 14px;
}

/* toolbars */
.toolbars {
  display: flex;
  flex: none;
  height: 30px;
  border-top: 1px solid #fff;
  border-bottom: 1px solid #a8b0b0;
}
.toolbar {
  display: flex;
  align-items: center;
  padding: 0 1px 2px 6px;
  border-right: 1px solid #a0a8b0;
  border-left: 1px solid #fff;
}
.grip {
  width: 2px;
  height: 22px;
  margin: 0 3px 0 1px;
  border-left: 1px solid #a0a4b0;
  border-right: 1px solid #a0a4b0;
  background: #fff;
}
.grip.tall {
  width: 3px;
  height: 36px;
  margin: 0 2px 0 0;
}
.tool {
  display: flex;
  align-items: center;
  flex: none;
  width: 23px;
  height: 22px;
  padding-left: 4px;
}
.tool.pressed {
  padding-left: 3px;
  border: 1px solid #22304c;
  background: #dfe5f0;
}
.tool,
.cmd-main,
.side-tab {
  box-sizing: border-box;
}
.tool-drop {
  display: flex;
  align-items: center;
  justify-content: center;
  width: 13px;
  height: 22px;
}
.tool-drop.off {
  opacity: .3;
}
.tool-sep {
  width: 1px;
  height: 22px;
  margin: 0 4px 0 3px;
  background: #b8bcbc;
}
.commands {
  display: flex;
  align-items: center;
  flex: none;
  height: 43px;
  padding-left: 6px;
  border-top: 1px solid #fff;
  border-bottom: 1px solid #a8b0b0;
  box-sizing: border-box;
}
.cmd {
  display: flex;
  flex: none;
  height: 37px;
}
.cmd.tab {
  background: #dce1e6;
}
.cmd-main {
  display: flex;
  flex-direction: column;
  align-items: center;
  width: 61px;
  padding: 4px 0 0 1px;
  line-height: 16px;
  white-space: nowrap;
}
.cmd-drop {
  display: flex;
  align-items: center;
  justify-content: center;
  width: 13px;
}
.cmd.active {
  border: 1px solid #22304c;
  background: #e6eaf2;
  box-shadow: 0 1px 0 #22304c;
  box-sizing: border-box;
}
.cmd.active .cmd-main {
  width: 60px;
  padding: 3px 0 0;
}
.cmd.active .cmd-drop {
  width: 12px;
  border-left: 1px solid #22304c;
}
.cmd-sep {
  width: 1px;
  height: 34px;
  margin: 0 3px 0 4px;
  background: #98a0a4;
}
.cmd-more {
  align-self: flex-start;
  margin: 5px 2px 0 auto;
}
.cmd-more svg {
  width: 8px;
  height: 7px;
}

/* main area */
.main {
  display: flex;
  flex: 1;
  min-height: 0;
}
.side {
  display: flex;
  flex-direction: column;
  flex: none;
  width: 192px;
  padding: 0 0 0 3px;
}
.side-head {
  display: flex;
  align-items: flex-end;
  flex: none;
  height: 28px;
  margin-top: 4px;
  border-top: 1px solid #a8b4b8;
  border-bottom: 1px solid #a8b4b8;
  box-sizing: border-box;
}
.side-tab {
  display: flex;
  align-items: center;
  width: 27px;
  height: 21px;
  margin-right: 1px;
  padding-left: 5px;
  border-top: 2px solid #40485c;
  border-right: 1px solid #606878;
  background: linear-gradient(#7c8898, #d4d9de);
}
.side-tab.active {
  width: 30px;
  height: 24px;
  margin-right: 0;
  background: linear-gradient(#747f90, #eceef0);
}
.round {
  flex: none;
  width: 16px;
  height: 16px;
  border: 1px solid #8ca0d0;
  border-radius: 50%;
  background: #f4f7fd;
  box-sizing: border-box;
}
.round svg {
  width: 14px;
  height: 14px;
}
.round path {
  fill: none;
  stroke: #1c3c94;
  stroke-width: 1.5;
}
.side-head .round {
  margin: 0 2px 3px auto;
}
.tree {
  position: relative;
  flex: 1;
  border-left: 1px solid #a8b4b8;
  background: #fff;
}
.row {
  display: flex;
  align-items: center;
  height: 18px;
  white-space: nowrap;
}
.root {
  gap: 5px;
  padding: 2px 0 0 3px;
}
.nodes {
  position: relative;
  margin: 0;
  padding: 0 0 0 6px;
  list-style: none;
}
.nodes::before {
  content: "";
  position: absolute;
  left: 11px;
  top: 0;
  bottom: 10px;
  border-left: 1px dotted #90a0b8;
}
.node .ico {
  margin-right: 4px;
}
.branch {
  position: relative;
  display: flex;
  align-items: center;
  width: 16px;
  height: 18px;
}
.branch::before {
  content: "";
  position: absolute;
  left: 6px;
  right: 1px;
  top: 10px;
  border-top: 1px dotted #90a0b8;
}
.plus {
  position: relative;
  width: 9px;
  height: 9px;
  margin: 3px 0 0 1px;
  border: 1px solid #58687c;
  background:
    linear-gradient(#000, #000) center / 5px 1px no-repeat,
    linear-gradient(#000, #000) center / 1px 5px no-repeat,
    linear-gradient(135deg, #fff, #b8c4d4);
  box-sizing: border-box;
}
.rollback {
  height: 1px;
  border-top: 1px solid #e8e020;
  background: #202000;
}
.cover {
  position: absolute;
  left: 20px;
  top: 187px;
  width: 90px;
  height: 184px;
  background: #000;
}
.splitter {
  display: flex;
  align-items: center;
  flex: none;
  width: 5px;
  border-left: 1px solid #a0b0b0;
  border-right: 1px solid #a0b0b0;
}
.splitter svg {
  width: 5px;
  height: 22px;
  margin-bottom: 22px;
}
.work {
  display: flex;
  flex-direction: column;
  flex: 1;
  min-width: 0;
}
.view-row {
  display: flex;
  flex: 1;
  min-height: 0;
}
.view {
  position: relative;
  flex: 1;
  min-width: 0;
  background: #fff;
}
.model {
  width: 100%;
  height: 100%;
}
.triad {
  position: absolute;
  left: 31px;
  bottom: 36px;
  width: 40px;
  height: 54px;
  font: 10px "Liberation Serif", serif;
}
.config {
  position: absolute;
  left: 0;
  bottom: 0;
  display: flex;
  align-items: center;
  width: 121px;
  height: 19px;
  border: 1px solid #000;
  background: #ffffd4;
  box-sizing: border-box;
}
.config-select {
  appearance: none;
  flex: 1;
  height: 17px;
  padding: 0 0 0 21px;
  border: 0;
  border-right: 1px solid #000;
  border-radius: 0;
  background: none;
  color: #000;
  font: 10px/16px "Noto Sans CJK SC", sans-serif;
}
.config .arrow {
  margin: 0 3px 0 4px;
}
.vscroll {
  display: flex;
  flex-direction: column;
  justify-content: space-between;
  width: 17px;
  border-top: 6px solid #e8eaea;
  background: #a1b5c0;
  box-sizing: border-box;
}
.scroll-btn {
  flex: none;
  width: 17px;
  height: 17px;
  border: 1px solid #0c2030;
  background: #28648a;
  box-sizing: border-box;
}
.scroll-btn svg {
  width: 15px;
  height: 15px;
}
.scroll-btn path {
  fill: none;
  stroke: #88a8b8;
  stroke-width: 2;
}
.sheet-row {
  display: flex;
  flex: none;
  height: 15px;
}
.sheets {
  display: flex;
  align-items: stretch;
  flex: 1 1 5px;
  border-right: 1px solid #000;
  margin-right: 2px;
  line-height: 14px;
}
.sheet-nav {
  width: 15px;
  margin-right: 1px;
  border: 1px solid #a0a0a8;
  background: #d8dadc;
  box-sizing: border-box;
}
.sheet-nav svg {
  width: 13px;
  height: 12px;
  fill: #8c8c98;
}
.slant {
  width: 8px;
  height: 15px;
  fill: none;
}
.slant.last {
  margin-left: 6px;
}
.sheet {
  padding: 0 5px;
}
.sheet.active {
  background: #fff;
  font-weight: bold;
}
.hscroll {
  display: flex;
  justify-content: space-between;
  flex: 1 1 0;
  background: #a1b5c0;
}
.hscroll .scroll-btn {
  height: 15px;
}
.hscroll svg {
  height: 13px;
}
.corner {
  width: 25px;
  background: #e8eaea;
}
.corner::before {
  content: "";
  display: block;
  width: 6px;
  height: 14px;
  border-right: 1px solid #000;
}
.pane {
  display: flex;
  flex-direction: column;
  align-items: flex-start;
  flex: none;
  width: 24px;
  padding: 27px 0 74px;
  border-left: 1px solid #f4f4f4;
  box-sizing: border-box;
}
.pane-tab {
  display: flex;
  align-items: center;
  flex: none;
  width: 20px;
  height: 27px;
  border: 1px solid #a4b4bc;
  border-left: 0;
  border-top-color: #fff;
  border-radius: 0 4px 4px 0;
  box-sizing: border-box;
}
.pane-tab.active {
  border-right: 2px solid #f08028;
  background: #fff;
}
.pane .round {
  margin: 2px 0 0 2px;
}
.pane-grip {
  flex: 1;
  width: 3px;
  margin: 8px 0 2px 5px;
  border-left: 1px solid #a0a4b0;
  border-right: 1px solid #a0a4b0;
}

/* status bar */
.status {
  display: flex;
  align-items: center;
  justify-content: space-between;
  flex: none;
  height: 20px;
  padding: 0 41px 0 2px;
  background: linear-gradient(#a4b4be, #b6c0c6 70%, #98aab8);
}
.status-right {
  display: flex;
  align-items: center;
}
.status-right i {
  height: 12px;
  margin-right: 7px;
  border-right: 1px solid #f0f4f4;
}
.editing {
  margin: 0 6px 0 -4px;
}
.status-box {
  width: 13px;
  height: 13px;
  margin: 0 7px 0 4px;
  border-top: 1px solid #707880;
  background: #fff;
  box-sizing: border-box;
}

/* taskbar */
.taskbar {
  display: flex;
  align-items: center;
  flex: none;
  height: 31px;
  padding-bottom: 3px;
  border-top: 2px solid #5c7488;
  box-sizing: border-box;
  background: linear-gradient(#2c4058, #48586c 60%, #6c7884 85%, #20303c);
}
.start {
  display: flex;
  align-items: center;
  flex: none;
  width: 106px;
  height: 26px;
  margin: 0 14px 0 3px;
  padding: 0 1px 0 12px;
  border: 1px solid #181c20;
  border-radius: 14px;
  background: linear-gradient(#4c4c4c, #a4a4a4 40%, #707070 70%, #484848);
  box-sizing: border-box;
  color: #fff;
}
.flag {
  width: 20px;
  height: 20px;
}
.start-text {
  margin: 0 auto 0 5px;
  font-size: 19px;
  line-height: 24px;
  white-space: nowrap;
  text-shadow: 1px 1px 2px #000;
}
.start-orb {
  flex: none;
  width: 22px;
  height: 22px;
  border: 1px solid #180004;
  border-radius: 50%;
  background: radial-gradient(circle at 40% 30%, #e05468, #a00c24 50%, #600010);
  box-sizing: border-box;
}
.tasks {
  display: flex;
  gap: 3px;
  flex: 1;
}
.task {
  display: flex;
  align-items: center;
  gap: 3px;
  flex: 0 1 157px;
  min-width: 0;
  height: 26px;
  padding-left: 19px;
  border: 1px solid #8ca4b0;
  border-right-color: #c0d0d8;
  background: linear-gradient(#8ca4b0, #64848f 50%, #587884);
  box-sizing: border-box;
  color: #fff;
  white-space: nowrap;
}
.task.active {
  border-color: #28343c;
  background: linear-gradient(#34444c, #4c5c64);
  font-family: Roboto, sans-serif;
  font-size: 11px;
}
.keyboard {
  width: 16px;
  height: 16px;
  margin-right: 16px;
}
.tray {
  display: flex;
  align-items: center;
  gap: 3px;
  height: 28px;
  padding-right: 13px;
  background: linear-gradient(#505050, #8c8c8c 70%, #b0b0b0 85%, #404040);
}
.tray-arrow {
  width: 16px;
  height: 16px;
  margin: 0 7px 0 -8px;
  border-radius: 50%;
  background: radial-gradient(circle at 50% 80%, #6cc0f0, #2c78a8);
}
.clock {
  margin-left: 4px;
  color: #fff;
  font-size: 11px;
}
</style>
